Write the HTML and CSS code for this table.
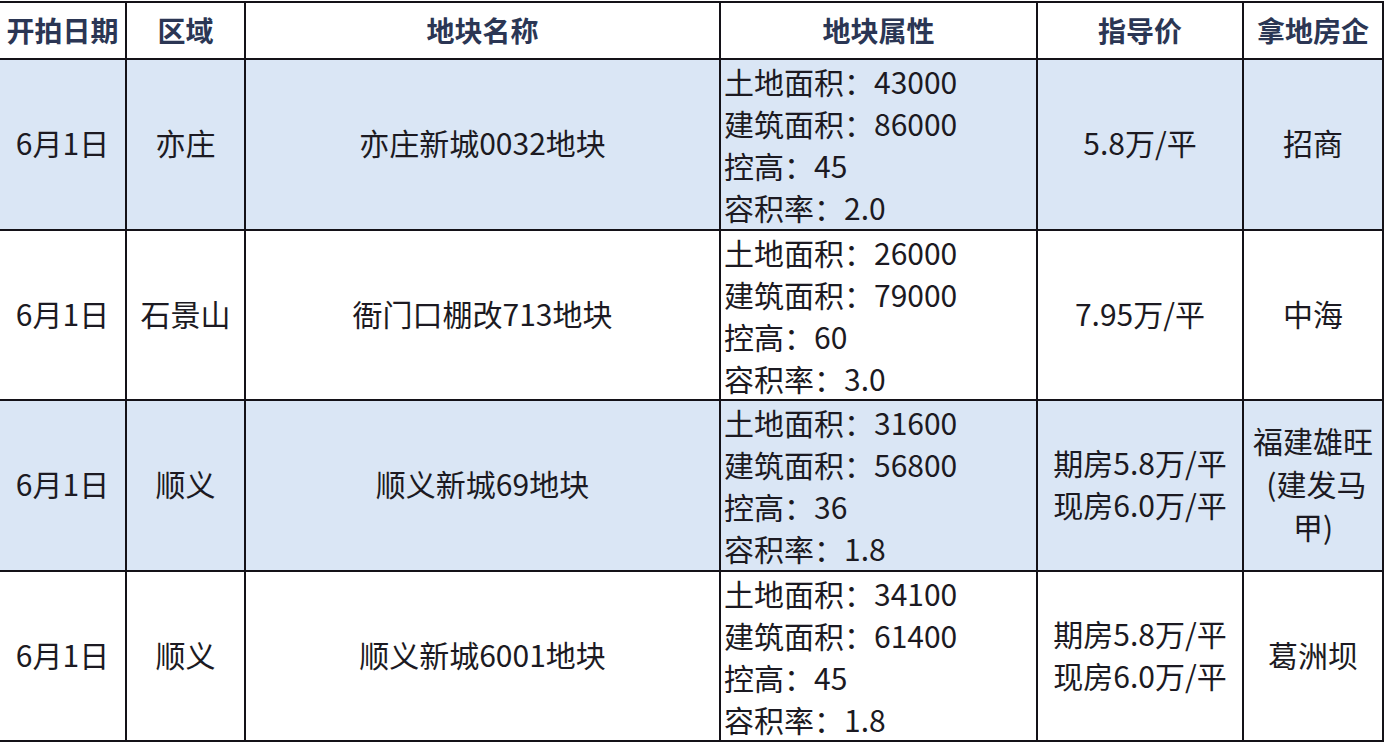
FILE: index.html
```html
<!DOCTYPE html>
<html lang="zh">
<head>
<meta charset="utf-8">
<title>土地拍卖</title>
<link rel="stylesheet" href="styles.css">
</head>
<body>
<table class="land">
  <colgroup>
    <col class="c1"><col class="c2"><col class="c3"><col class="c4"><col class="c5"><col class="c6">
  </colgroup>
  <thead>
    <tr class="head">
      <th>开拍日期</th><th>区域</th><th>地块名称</th><th>地块属性</th><th>指导价</th><th>拿地房企</th>
    </tr>
  </thead>
  <tbody>
    <tr class="row blue">
      <td>6月1日</td><td>亦庄</td><td>亦庄新城0032地块</td>
      <td class="attr">土地面积：43000<br>建筑面积：86000<br>控高：45<br>容积率：2.0</td>
      <td>5.8万/平</td><td>招商</td>
    </tr>
    <tr class="row">
      <td>6月1日</td><td>石景山</td><td>衙门口棚改713地块</td>
      <td class="attr">土地面积：26000<br>建筑面积：79000<br>控高：60<br>容积率：3.0</td>
      <td>7.95万/平</td><td>中海</td>
    </tr>
    <tr class="row blue">
      <td>6月1日</td><td>顺义</td><td>顺义新城69地块</td>
      <td class="attr">土地面积：31600<br>建筑面积：56800<br>控高：36<br>容积率：1.8</td>
      <td>期房5.8万/平<br>现房6.0万/平</td><td class="firm">福建雄旺<br>&nbsp;(建发马<br>甲)</td>
    </tr>
    <tr class="row">
      <td>6月1日</td><td>顺义</td><td>顺义新城6001地块</td>
      <td class="attr">土地面积：34100<br>建筑面积：61400<br>控高：45<br>容积率：1.8</td>
      <td>期房5.8万/平<br>现房6.0万/平</td><td>葛洲坝</td>
    </tr>
  </tbody>
</table>
</body>
</html>
```

FILE: styles.css
```css
html, body {
  margin: 0;
  padding: 0;
  background: #ffffff;
}

body {
  font-family: "Noto Sans CJK SC", "Noto Sans", sans-serif;
  color: #1c1a22;
}

.land {
  border-collapse: collapse;
  table-layout: fixed;
  width: 1383px;
  margin-top: 1px;
}

.c1 { width: 126px; }
.c2 { width: 119px; }
.c3 { width: 475px; }
.c4 { width: 317px; }
.c5 { width: 206px; }
.c6 { width: 140px; }

.land th,
.land td {
  border: 2px solid #141218;
  padding: 0;
  text-align: center;
  vertical-align: middle;
  overflow: hidden;
  white-space: nowrap;
}

.land th:first-child,
.land td:first-child {
  border-left: none;
}

.head th {
  height: 53px;
  padding-bottom: 2px;
  font-size: 28px;
  font-weight: 700;
  color: #2b3654;
  background: #ffffff;
  line-height: 40px;
}

.row td {
  height: 164.5px;
  padding-bottom: 4px;
  font-size: 30px;
  line-height: 42.1px;
  font-weight: 400;
}

.row.blue td {
  background: #dae6f5;
}

.row td.attr {
  height: 168.5px;
  padding-bottom: 0;
  text-align: left;
  padding-left: 3px;
}

.row td.firm {
  line-height: 43px;
}
```
